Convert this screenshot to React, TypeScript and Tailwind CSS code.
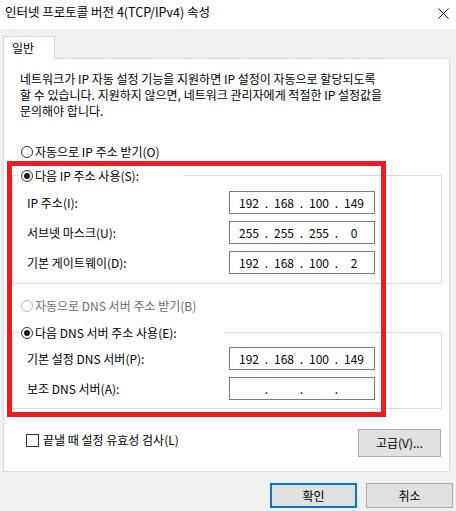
import React from "react";

const font = "font-['Noto_Sans_CJK_KR',sans-serif]";

function Radio({ checked, disabled }: { checked?: boolean; disabled?: boolean }) {
  return (
    <span
      className={`w-[12px] h-[12px] rounded-full border flex items-center justify-center bg-white shrink-0 ${
        disabled ? "border-[#bcbcbc]" : "border-[#333333]"
      }`}
    >
      {checked && <span className="w-[6px] h-[6px] rounded-full bg-[#1a1a1a]" />}
    </span>
  );
}

function IpBox({ parts }: { parts: string[] }) {
  return (
    <div className="w-[146px] h-[23px] border border-[#7a7a7a] bg-white flex items-center pl-[6px] text-[12px] text-black">
      {parts.map((p, i) => (
        <React.Fragment key={i}>
          <span className="w-[26px] text-center">{p}</span>
          {i < 3 && <span className="w-[9px] text-center">.</span>}
        </React.Fragment>
      ))}
    </div>
  );
}

function Row({ label, parts }: { label: string; parts: string[] }) {
  return (
    <div className="flex items-center justify-between">
      <span>{label}</span>
      <IpBox parts={parts} />
    </div>
  );
}

export default function App() {
  return (
    <div className={`w-[456px] h-[511px] bg-[#f0f0f0] relative text-[12px] leading-[16px] text-black ${font}`}>
      {/* title bar */}
      <div className="h-[29px] bg-white flex items-start justify-between pl-[5px] pr-[7px] pt-[4px]">
        <span className="text-[12.5px]">인터넷 프로토콜 버전 4(TCP/IPv4) 속성</span>
        <svg width="11" height="11" viewBox="0 0 11 11" className="mt-[4px]">
          <path d="M0.5 0.5 L10.5 10.5 M10.5 0.5 L0.5 10.5" stroke="#111" strokeWidth="1" />
        </svg>
      </div>

      <div className="pt-[7px] pl-[3px]">
        {/* tab */}
        <div className="w-[52px] h-[23px] bg-white border border-b-0 border-[#d9d9d9] relative z-10 -mb-[1px] pl-[8px] pt-[3px]">
          일반
        </div>

        {/* panel */}
        <div className="w-[447px] h-[414px] bg-white border border-[#d9d9d9] pl-[8px] pr-[7px]">
          <p className="mt-[12px] pl-[8px] leading-[16px]">
            네트워크가 IP 자동 설정 기능을 지원하면 IP 설정이 자동으로 할당되도록
            <br />
            할 수 있습니다. 지원하지 않으면, 네트워크 관리자에게 적절한 IP 설정값을
            <br />
            문의해야 합니다.
          </p>

          <div className="mt-[25px] ml-[9px] flex items-center gap-[2px] h-[16px]">
            <Radio />
            <span>자동으로 IP 주소 받기(O)</span>
          </div>

          {/* IP group */}
          <div className="mt-[15px] h-[109px] border border-[#dcdcdc] pl-[14px] pr-[66px]">
            <div className="-mt-[8px] -ml-[8px] w-[164px] h-[16px] bg-white flex items-center gap-[2px] pl-[2px]">
              <Radio checked />
              <span>다음 IP 주소 사용(S):</span>
            </div>
            <div className="mt-[7px] flex flex-col gap-[7px]">
              <Row label="IP 주소(I):" parts={["192", "168", "100", "149"]} />
              <Row label="서브넷 마스크(U):" parts={["255", "255", "255", "0"]} />
              <Row label="기본 게이트웨이(D):" parts={["192", "168", "100", "2"]} />
            </div>
          </div>

          <div className="mt-[14px] ml-[9px] flex items-center gap-[2px] h-[16px] text-[#6d6d6d]">
            <Radio disabled />
            <span>자동으로 DNS 서버 주소 받기(B)</span>
          </div>

          {/* DNS group */}
          <div className="mt-[18px] h-[77px] border border-[#dcdcdc] pl-[14px] pr-[66px]">
            <div className="-mt-[8px] -ml-[8px] w-[205px] h-[16px] bg-white flex items-center gap-[2px] pl-[2px]">
              <Radio checked />
              <span>다음 DNS 서버 주소 사용(E):</span>
            </div>
            <div className="mt-[6px] flex flex-col gap-[7px]">
              <Row label="기본 설정 DNS 서버(P):" parts={["192", "168", "100", "149"]} />
              <Row label="보조 DNS 서버(A):" parts={["", "", "", ""]} />
            </div>
          </div>

          <div className="mt-[20px] flex items-start justify-between">
            <div className="mt-[3px] ml-[14px] flex items-center gap-[4px]">
              <span className="w-[13px] h-[13px] border border-[#333333] bg-white" />
              <span>끝낼 때 설정 유효성 검사(L)</span>
            </div>
            <button className="w-[83px] h-[28px] bg-[#e1e1e1] border border-[#adadad] mr-[1px]">
              고급(V)...
            </button>
          </div>
        </div>
      </div>

      {/* bottom buttons */}
      <div className="mt-[11px] pr-[3px] flex justify-end gap-[9px]">
        <button className="w-[87px] h-[25px] bg-[#e1e1e1] border-2 border-[#0078d7]">확인</button>
        <button className="w-[87px] h-[25px] bg-[#e1e1e1] border border-[#adadad]">취소</button>
      </div>

      {/* red highlight annotation */}
      <div className="absolute left-[7px] top-[161px] w-[379px] h-[256px] border-[5px] border-[#ed1c24] pointer-events-none" />
    </div>
  );
}
